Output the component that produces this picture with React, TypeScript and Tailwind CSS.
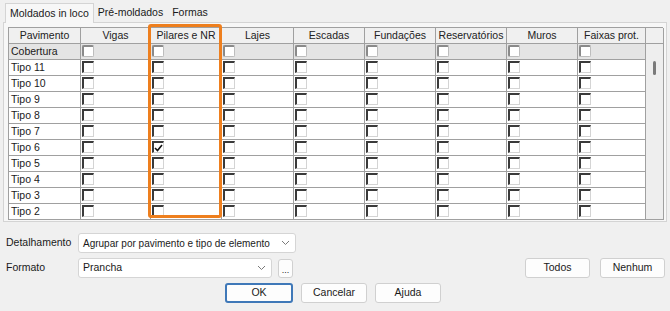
import React from 'react';

const columns = ['Pavimento', 'Vigas', 'Pilares e NR', 'Lajes', 'Escadas', 'Fundações', 'Reservatórios', 'Muros', 'Faixas prot.'];
const floors = ['Cobertura', 'Tipo 11', 'Tipo 10', 'Tipo 9', 'Tipo 8', 'Tipo 7', 'Tipo 6', 'Tipo 5', 'Tipo 4', 'Tipo 3', 'Tipo 2'];

const CheckBox: React.FC<{ checked?: boolean; soft?: boolean }> = ({ checked, soft }) => (
    <div
        className={`w-[12px] h-[12px] bg-white border-l-2 border-t-2 border-r border-b flex items-center justify-center ${soft ? 'border-l-[#8a8a8a] border-t-[#8a8a8a] border-r-[#bdbdbd] border-b-[#bdbdbd] rounded-[2px]' : 'border-l-[#3a3a3a] border-t-[#3a3a3a] border-r-[#d4d4d4] border-b-[#d4d4d4]'}`}
    >
        {checked && (
            <svg width="9" height="8" viewBox="0 0 9 8">
                <path d="M1 4 L3.5 6.5 L8 1" stroke="#111" strokeWidth="1.6" fill="none" />
            </svg>
        )}
    </div>
);

const Button: React.FC<{ label: string; width: string; primary?: boolean }> = ({ label, width, primary }) => (
    <button
        type="button"
        className={`${width} h-[20px] rounded-[3px] bg-[#fdfdfd] text-[10.5px] text-[#1a1a1a] flex items-center justify-center ${primary ? 'border-2 border-[#3f78b8]' : 'border border-[#d0d0d0]'}`}
    >
        {label}
    </button>
);

const Chevron = () => (
    <svg width="9" height="6" viewBox="0 0 9 6">
        <path d="M1 1 L4.5 4.5 L8 1" stroke="#7a7a7a" strokeWidth="1" fill="none" />
    </svg>
);

export default function App() {
    return (
        <div className="w-[670px] h-[311px] bg-[#f0f0f0] overflow-hidden text-[10.5px] text-[#1a1a1a] whitespace-nowrap" style={{ fontFamily: '"Liberation Sans", Arial, sans-serif' }}>
            {/* tabs */}
            <div className="flex items-end h-[22px] pl-[5px]">
                <div className="h-[20px] px-[4px] flex items-center bg-[#f7f7f7] border border-b-0 border-[#d4d4d4] relative top-[1px]">Moldados in loco</div>
                <div className="h-[18px] pl-[4px] pr-[6px] flex items-center">Pré-moldados</div>
                <div className="h-[18px] px-[3px] flex items-center">Formas</div>
            </div>

            {/* panel */}
            <div className="mx-[3px] h-[200px] border border-[#d4d4d4] bg-[#f7f7f7] pt-[4px] pl-[4px]">
                <div className="relative w-[655px]">
                    <div className="grid grid-cols-[72px_70px_71px_72px_71px_71px_71px_71px_68px_18px] border-l border-t border-[#a0a0a0] bg-white">
                        {columns.map(c => (
                            <div key={c} className="h-[16px] bg-[#f0f0f0] border-r border-b border-[#a0a0a0] flex items-center justify-center text-[#222] overflow-hidden">
                                {c}
                            </div>
                        ))}
                        <div className="h-[16px] bg-[#f0f0f0] border-r border-b border-[#a0a0a0]" />

                        {floors.map((f, r) => (
                            <React.Fragment key={f}>
                                <div className={`h-[16px] border-r border-b border-[#a0a0a0] pl-[2px] flex items-center ${r === 0 ? 'bg-[#e4e4e4]' : 'bg-white'}`}>{f}</div>
                                {columns.slice(1).map((c, ci) => (
                                    <div key={c} className={`h-[16px] border-r border-b border-[#a0a0a0] pl-[1px] pt-[1px] ${r === 0 ? 'bg-[#e4e4e4]' : 'bg-white'}`}>
                                        <CheckBox soft={r === 0} checked={f === 'Tipo 6' && ci === 1} />
                                    </div>
                                ))}
                                {r === 0 && (
                                    <div className="row-span-11 bg-[#eeeeee] border-r border-b border-[#a0a0a0] flex justify-center pt-[17px]">
                                        <div className="w-[3px] h-[14px] rounded-full bg-[#7a7a7a]" />
                                    </div>
                                )}
                            </React.Fragment>
                        ))}
                    </div>
                    {/* highlight */}
                    <div className="absolute left-[140px] top-[-3px] w-[74px] h-[194px] border-[3px] border-[#ee7f1e] rounded-[3px] pointer-events-none" />
                </div>
            </div>

            {/* bottom controls */}
            <div className="mt-[11px] flex items-center h-[20px]">
                <div className="w-[78px] pl-[6px]">Detalhamento</div>
                <div className="w-[218px] h-[20px] bg-white border border-[#d5d5d5] rounded-[3px] flex items-center justify-between pl-[4px] pr-[5px]">
                    <span className="text-[10px]">Agrupar por pavimento e tipo de elemento</span>
                    <Chevron />
                </div>
            </div>
            <div className="mt-[5px] flex items-center h-[20px]">
                <div className="w-[78px] pl-[6px]">Formato</div>
                <div className="w-[194px] h-[20px] bg-white border border-[#d5d5d5] rounded-[3px] flex items-center justify-between pl-[4px] pr-[5px]">
                    <span>Prancha</span>
                    <Chevron />
                </div>
                <div className="ml-[6px] w-[15px] h-[19px] bg-[#fdfdfd] border border-[#d0d0d0] rounded-[3px] flex items-end justify-center pb-[2px] text-[9px] leading-none">...</div>
                <div className="ml-auto mr-[5px] flex gap-[10px]">
                    <Button label="Todos" width="w-[65px]" />
                    <Button label="Nenhum" width="w-[65px]" />
                </div>
            </div>
            <div className="mt-[5px] flex items-center h-[20px] pl-[225px] gap-[8px]">
                <Button label="OK" width="w-[68px]" primary />
                <Button label="Cancelar" width="w-[66px]" />
                <Button label="Ajuda" width="w-[66px]" />
            </div>
        </div>
    );
}
